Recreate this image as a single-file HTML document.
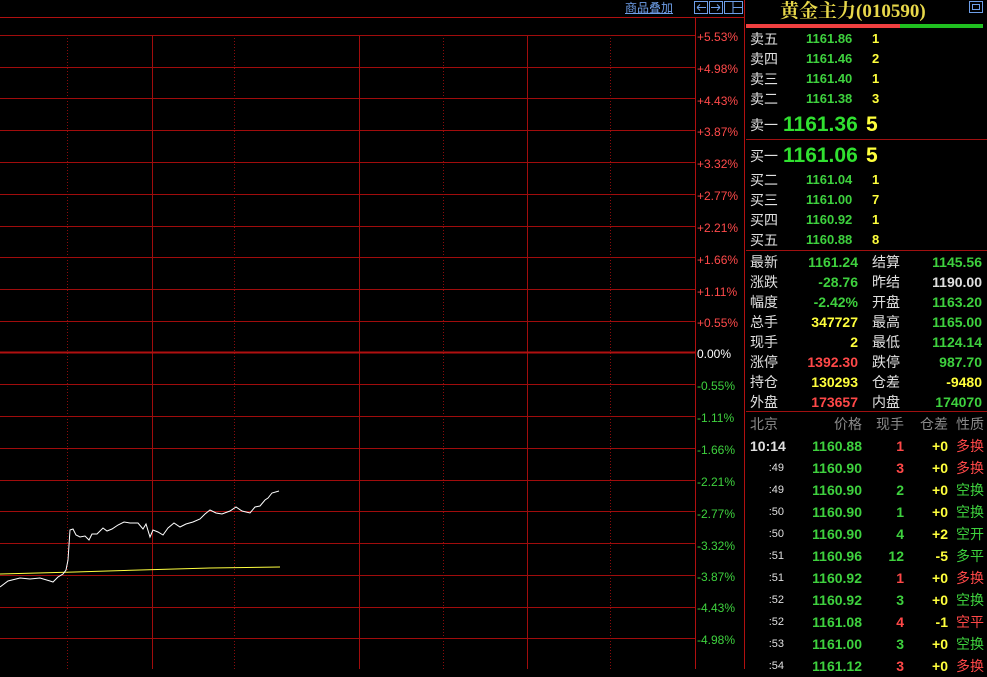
<!DOCTYPE html>
<html><head><meta charset="utf-8"><style>
*{margin:0;padding:0;box-sizing:border-box}
body{width:987px;height:669px;background:#000;overflow:hidden;position:relative;font-family:"Liberation Sans","Noto Sans CJK SC",sans-serif;font-size:13px;color:#c0c0c0}
.a{position:absolute;white-space:nowrap;line-height:16px}
.g{color:#3ed13e}.y{color:#ffff3c}.r{color:#ff4848}.w{color:#e0e0e0}.gr{color:#8a8a8a}
.b{font-weight:bold}
.lbl{position:absolute;left:697px;font-size:12px;color:#ff4a4a;line-height:12px}
.hl{position:absolute;left:746px;width:241px;height:1px;background:#a01010}
.st span.g,.st span.y,.st span.r,.st span.w2{font-weight:bold}
.tk span+span{font-weight:bold}
</style></head><body>
<svg width="745" height="669" style="position:absolute;left:0;top:0">
<line x1="0" y1="17.5" x2="745" y2="17.5" stroke="#b01010"/>
<g stroke="#a00c0c" stroke-width="1">
<line x1="0" x2="695" y1="35.5" y2="35.5"/><line x1="0" x2="695" y1="67.5" y2="67.5"/><line x1="0" x2="695" y1="98.5" y2="98.5"/><line x1="0" x2="695" y1="130.5" y2="130.5"/><line x1="0" x2="695" y1="162.5" y2="162.5"/><line x1="0" x2="695" y1="194.5" y2="194.5"/><line x1="0" x2="695" y1="226.5" y2="226.5"/><line x1="0" x2="695" y1="257.5" y2="257.5"/><line x1="0" x2="695" y1="289.5" y2="289.5"/><line x1="0" x2="695" y1="321.5" y2="321.5"/>
<line x1="0" x2="695" y1="384.5" y2="384.5"/><line x1="0" x2="695" y1="416.5" y2="416.5"/><line x1="0" x2="695" y1="448.5" y2="448.5"/><line x1="0" x2="695" y1="480.5" y2="480.5"/><line x1="0" x2="695" y1="511.5" y2="511.5"/><line x1="0" x2="695" y1="543.5" y2="543.5"/><line x1="0" x2="695" y1="575.5" y2="575.5"/><line x1="0" x2="695" y1="607.5" y2="607.5"/><line x1="0" x2="695" y1="638.5" y2="638.5"/>
<line x1="152.5" x2="152.5" y1="35" y2="669"/><line x1="359.5" x2="359.5" y1="35" y2="669"/><line x1="527.5" x2="527.5" y1="35" y2="669"/>
</g>
<g stroke="#8a0c0c" stroke-dasharray="1,2">
<line x1="67.5" x2="67.5" y1="35" y2="669"/><line x1="234.5" x2="234.5" y1="35" y2="669"/><line x1="443.5" x2="443.5" y1="35" y2="669"/><line x1="610.5" x2="610.5" y1="35" y2="669"/>
</g>
<line x1="0" x2="695" y1="352.5" y2="352.5" stroke="#b01010" stroke-width="2"/>
<line x1="695.5" x2="695.5" y1="17" y2="669" stroke="#b01010"/>
<line x1="744.5" x2="744.5" y1="0" y2="669" stroke="#b01010"/>
<polyline fill="none" stroke="#ffff40" stroke-width="1" points="0,574 75,572 140,570 210,568 280,567"/>
<polyline fill="none" stroke="#fff" stroke-width="1" points="0,587 8,581 20,578 30,579 40,578 50,581 53,582 58,577 63,574 66,570 68,560 70,530 73,529 76,535 80,537 85,536 89,540 92,534 97,534 103,528 107,531 112,529 118,525 124,522 130,523 138,523 143,529 146,524 150,537 153,530 158,532 163,535 168,528 174,523 180,527 186,524 193,522 200,519 205,514 210,510 216,513 222,514 230,511 236,507 242,511 250,513 255,507 260,506 265,500 268,498 272,493 279,491"/>
</svg>
<svg width="987" height="20" style="position:absolute;left:0;top:0"><g fill="none" stroke="#6e9ee8"><rect x="694.5" y="1.5" width="13" height="12"/><rect x="709.5" y="1.5" width="13" height="12"/><rect x="724.5" y="1.5" width="18" height="12"/><rect x="969.5" y="1.5" width="13" height="11"/><rect x="972.5" y="4.5" width="7" height="5"/><path d="M697 7.5h9M697 7.5l3-3M697 7.5l3 3M720 7.5h-9M720 7.5l-3-3M720 7.5l-3 3M733 2v11M733 7.5h9"/></g></svg>
<div class="a" style="left:625px;top:0;font-size:12px;color:#6e9ee8;text-decoration:underline">商品叠加</div>
<div class="lbl" style="top:31px">+5.53%</div><div class="lbl" style="top:63px">+4.98%</div><div class="lbl" style="top:95px">+4.43%</div><div class="lbl" style="top:126px">+3.87%</div><div class="lbl" style="top:158px">+3.32%</div><div class="lbl" style="top:190px">+2.77%</div><div class="lbl" style="top:222px">+2.21%</div><div class="lbl" style="top:254px">+1.66%</div><div class="lbl" style="top:286px">+1.11%</div><div class="lbl" style="top:317px">+0.55%</div>
<div class="lbl" style="top:348px;color:#fff">0.00%</div>
<div class="lbl" style="top:380px;color:#3ed13e">-0.55%</div><div class="lbl" style="top:412px;color:#3ed13e">-1.11%</div><div class="lbl" style="top:444px;color:#3ed13e">-1.66%</div><div class="lbl" style="top:476px;color:#3ed13e">-2.21%</div><div class="lbl" style="top:508px;color:#3ed13e">-2.77%</div><div class="lbl" style="top:540px;color:#3ed13e">-3.32%</div><div class="lbl" style="top:571px;color:#3ed13e">-3.87%</div><div class="lbl" style="top:602px;color:#3ed13e">-4.43%</div><div class="lbl" style="top:634px;color:#3ed13e">-4.98%</div>
<div class="a" style="left:780px;top:0px;font-size:19px;line-height:23px;color:#e8d84a;font-family:'Liberation Serif','Noto Serif CJK SC',serif;font-weight:bold">黄金主力(010590)</div>
<div style="position:absolute;left:746px;top:24px;width:154px;height:4px;background:#f04040"></div>
<div style="position:absolute;left:900px;top:24px;width:83px;height:4px;background:#20c020"></div>
<div class="a w" style="left:750px;top:31px;font-size:14px">卖五</div><div class="a g b" style="left:806px;top:31px">1161.86</div><div class="a y b" style="left:872px;top:31px">1</div>
<div class="a w" style="left:750px;top:51px;font-size:14px">卖四</div><div class="a g b" style="left:806px;top:51px">1161.46</div><div class="a y b" style="left:872px;top:51px">2</div>
<div class="a w" style="left:750px;top:71px;font-size:14px">卖三</div><div class="a g b" style="left:806px;top:71px">1161.40</div><div class="a y b" style="left:872px;top:71px">1</div>
<div class="a w" style="left:750px;top:91px;font-size:14px">卖二</div><div class="a g b" style="left:806px;top:91px">1161.38</div><div class="a y b" style="left:872px;top:91px">3</div>
<div class="a w" style="left:750px;top:117px;font-size:14px">卖一</div><div class="a" style="left:783px;top:113px;font-size:21px;line-height:24px;font-weight:bold;color:#30e030">1161.36</div><div class="a y" style="left:866px;top:113px;font-size:21px;line-height:24px;font-weight:bold">5</div>
<div class="hl" style="top:139px"></div>
<div class="a w" style="left:750px;top:148px;font-size:14px">买一</div><div class="a" style="left:783px;top:144px;font-size:21px;line-height:24px;font-weight:bold;color:#30e030">1161.06</div><div class="a y" style="left:866px;top:144px;font-size:21px;line-height:24px;font-weight:bold">5</div>
<div class="a w" style="left:750px;top:172px;font-size:14px">买二</div><div class="a g b" style="left:806px;top:172px">1161.04</div><div class="a y b" style="left:872px;top:172px">1</div>
<div class="a w" style="left:750px;top:192px;font-size:14px">买三</div><div class="a g b" style="left:806px;top:192px">1161.00</div><div class="a y b" style="left:872px;top:192px">7</div>
<div class="a w" style="left:750px;top:212px;font-size:14px">买四</div><div class="a g b" style="left:806px;top:212px">1160.92</div><div class="a y b" style="left:872px;top:212px">1</div>
<div class="a w" style="left:750px;top:232px;font-size:14px">买五</div><div class="a g b" style="left:806px;top:232px">1160.88</div><div class="a y b" style="left:872px;top:232px">8</div>
<div class="hl" style="top:250px"></div>
<div class="st" style="position:absolute;left:750px;top:252px;width:232px;font-size:14px;line-height:20px">
<div style="display:flex"><span class="w" style="width:46px">最新</span><span class="g" style="width:62px;text-align:right">1161.24</span><span class="w" style="margin-left:14px;width:40px">结算</span><span class="g" style="width:70px;text-align:right">1145.56</span></div>
<div style="display:flex"><span class="w" style="width:46px">涨跌</span><span class="g" style="width:62px;text-align:right">-28.76</span><span class="w" style="margin-left:14px;width:40px">昨结</span><span class="w w2" style="width:70px;text-align:right">1190.00</span></div>
<div style="display:flex"><span class="w" style="width:46px">幅度</span><span class="g" style="width:62px;text-align:right">-2.42%</span><span class="w" style="margin-left:14px;width:40px">开盘</span><span class="g" style="width:70px;text-align:right">1163.20</span></div>
<div style="display:flex"><span class="w" style="width:46px">总手</span><span class="y" style="width:62px;text-align:right">347727</span><span class="w" style="margin-left:14px;width:40px">最高</span><span class="g" style="width:70px;text-align:right">1165.00</span></div>
<div style="display:flex"><span class="w" style="width:46px">现手</span><span class="y" style="width:62px;text-align:right">2</span><span class="w" style="margin-left:14px;width:40px">最低</span><span class="g" style="width:70px;text-align:right">1124.14</span></div>
<div style="display:flex"><span class="w" style="width:46px">涨停</span><span class="r" style="width:62px;text-align:right">1392.30</span><span class="w" style="margin-left:14px;width:40px">跌停</span><span class="g" style="width:70px;text-align:right">987.70</span></div>
<div style="display:flex"><span class="w" style="width:46px">持仓</span><span class="y" style="width:62px;text-align:right">130293</span><span class="w" style="margin-left:14px;width:40px">仓差</span><span class="y" style="width:70px;text-align:right">-9480</span></div>
<div style="display:flex"><span class="w" style="width:46px">外盘</span><span class="r" style="width:62px;text-align:right">173657</span><span class="w" style="margin-left:14px;width:40px">内盘</span><span class="g" style="width:70px;text-align:right">174070</span></div>
</div>
<div class="hl" style="top:411px"></div>
<div class="tk" style="position:absolute;left:750px;top:413px;width:235px;font-size:14px;line-height:22px">
<div style="display:flex;color:#8a8a8a"><span style="width:40px">北京</span><span style="width:72px;text-align:right;font-weight:normal">价格</span><span style="width:42px;text-align:right;font-weight:normal">现手</span><span style="width:44px;text-align:right;font-weight:normal">仓差</span><span style="width:36px;text-align:right;font-weight:normal">性质</span></div>
<div style="display:flex"><span class="w" style="width:40px;font-weight:bold">10:14</span><span class="g" style="width:72px;text-align:right">1160.88</span><span class="r" style="width:42px;text-align:right">1</span><span class="y" style="width:44px;text-align:right">+0</span><span class="r" style="width:36px;text-align:right;font-weight:normal">多换</span></div>
<div style="display:flex"><span class="w" style="width:40px;text-align:right;padding-right:6px;font-size:11px">:49</span><span class="g" style="width:72px;text-align:right">1160.90</span><span class="r" style="width:42px;text-align:right">3</span><span class="y" style="width:44px;text-align:right">+0</span><span class="r" style="width:36px;text-align:right;font-weight:normal">多换</span></div>
<div style="display:flex"><span class="w" style="width:40px;text-align:right;padding-right:6px;font-size:11px">:49</span><span class="g" style="width:72px;text-align:right">1160.90</span><span class="g" style="width:42px;text-align:right">2</span><span class="y" style="width:44px;text-align:right">+0</span><span class="g" style="width:36px;text-align:right;font-weight:normal">空换</span></div>
<div style="display:flex"><span class="w" style="width:40px;text-align:right;padding-right:6px;font-size:11px">:50</span><span class="g" style="width:72px;text-align:right">1160.90</span><span class="g" style="width:42px;text-align:right">1</span><span class="y" style="width:44px;text-align:right">+0</span><span class="g" style="width:36px;text-align:right;font-weight:normal">空换</span></div>
<div style="display:flex"><span class="w" style="width:40px;text-align:right;padding-right:6px;font-size:11px">:50</span><span class="g" style="width:72px;text-align:right">1160.90</span><span class="g" style="width:42px;text-align:right">4</span><span class="y" style="width:44px;text-align:right">+2</span><span class="g" style="width:36px;text-align:right;font-weight:normal">空开</span></div>
<div style="display:flex"><span class="w" style="width:40px;text-align:right;padding-right:6px;font-size:11px">:51</span><span class="g" style="width:72px;text-align:right">1160.96</span><span class="g" style="width:42px;text-align:right">12</span><span class="y" style="width:44px;text-align:right">-5</span><span class="g" style="width:36px;text-align:right;font-weight:normal">多平</span></div>
<div style="display:flex"><span class="w" style="width:40px;text-align:right;padding-right:6px;font-size:11px">:51</span><span class="g" style="width:72px;text-align:right">1160.92</span><span class="r" style="width:42px;text-align:right">1</span><span class="y" style="width:44px;text-align:right">+0</span><span class="r" style="width:36px;text-align:right;font-weight:normal">多换</span></div>
<div style="display:flex"><span class="w" style="width:40px;text-align:right;padding-right:6px;font-size:11px">:52</span><span class="g" style="width:72px;text-align:right">1160.92</span><span class="g" style="width:42px;text-align:right">3</span><span class="y" style="width:44px;text-align:right">+0</span><span class="g" style="width:36px;text-align:right;font-weight:normal">空换</span></div>
<div style="display:flex"><span class="w" style="width:40px;text-align:right;padding-right:6px;font-size:11px">:52</span><span class="g" style="width:72px;text-align:right">1161.08</span><span class="r" style="width:42px;text-align:right">4</span><span class="y" style="width:44px;text-align:right">-1</span><span class="r" style="width:36px;text-align:right;font-weight:normal">空平</span></div>
<div style="display:flex"><span class="w" style="width:40px;text-align:right;padding-right:6px;font-size:11px">:53</span><span class="g" style="width:72px;text-align:right">1161.00</span><span class="g" style="width:42px;text-align:right">3</span><span class="y" style="width:44px;text-align:right">+0</span><span class="g" style="width:36px;text-align:right;font-weight:normal">空换</span></div>
<div style="display:flex"><span class="w" style="width:40px;text-align:right;padding-right:6px;font-size:11px">:54</span><span class="g" style="width:72px;text-align:right">1161.12</span><span class="r" style="width:42px;text-align:right">3</span><span class="y" style="width:44px;text-align:right">+0</span><span class="r" style="width:36px;text-align:right;font-weight:normal">多换</span></div>
</div>
</body></html>
